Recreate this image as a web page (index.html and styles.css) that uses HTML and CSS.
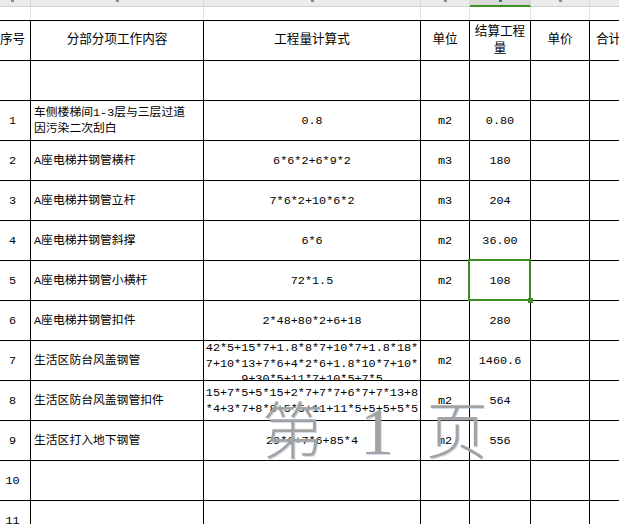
FILE: index.html
```html
<!DOCTYPE html>
<html lang="zh">
<head>
<meta charset="utf-8">
<title>工程量计算</title>
<link rel="stylesheet" href="styles.css">
</head>
<body>
<div class="colbar">
  <div class="ch"><i class="mk"></i></div>
  <div class="ch"><i class="mk"></i></div>
  <div class="ch"><i class="mk"></i></div>
  <div class="ch"><i class="mk"></i></div>
  <div class="ch sel"><i class="mk g"></i></div>
  <div class="ch"><i class="mk p"></i></div>
  <div class="ch"></div>
</div>
<div class="toprow">
  <div class="tc"></div><div class="tc"></div><div class="tc"></div><div class="tc"></div><div class="tc"></div><div class="tc"></div><div class="tc"></div>
</div>
<div class="sheet">
  <div class="c h">序号</div>
  <div class="c h">分部分项工作内容</div>
  <div class="c h">工程量计算式</div>
  <div class="c h">单位</div>
  <div class="c h"><span>结算工程<br>量</span></div>
  <div class="c h">单价</div>
  <div class="c h left">合计</div>

  <div class="c"></div><div class="c"></div><div class="c"></div><div class="c"></div><div class="c"></div><div class="c"></div><div class="c"></div>

  <div class="c">1</div>
  <div class="c desc"><span>车侧楼梯间1-3层与三层过道<br>因污染二次刮白</span></div>
  <div class="c">0.8</div>
  <div class="c">m2</div>
  <div class="c">0.80</div>
  <div class="c"></div><div class="c"></div>

  <div class="c">2</div>
  <div class="c desc">A座电梯井钢管横杆</div>
  <div class="c">6*6*2+6*9*2</div>
  <div class="c">m3</div>
  <div class="c">180</div>
  <div class="c"></div><div class="c"></div>

  <div class="c">3</div>
  <div class="c desc">A座电梯井钢管立杆</div>
  <div class="c">7*6*2+10*6*2</div>
  <div class="c">m3</div>
  <div class="c">204</div>
  <div class="c"></div><div class="c"></div>

  <div class="c">4</div>
  <div class="c desc">A座电梯井钢管斜撑</div>
  <div class="c">6*6</div>
  <div class="c">m2</div>
  <div class="c">36.00</div>
  <div class="c"></div><div class="c"></div>

  <div class="c">5</div>
  <div class="c desc">A座电梯井钢管小横杆</div>
  <div class="c">72*1.5</div>
  <div class="c">m2</div>
  <div class="c active">108<i class="selbox"></i><i class="handle"></i></div>
  <div class="c"></div><div class="c"></div>

  <div class="c">6</div>
  <div class="c desc">A座电梯井钢管扣件</div>
  <div class="c">2*48+80*2+6+18</div>
  <div class="c"></div>
  <div class="c">280</div>
  <div class="c"></div><div class="c"></div>

  <div class="c">7</div>
  <div class="c desc">生活区防台风盖钢管</div>
  <div class="c form top"><span>42*5+15*7+1.8*8*7+10*7+1.8*18*<br>7+10*13+7*6+4*2*6+1.8*10*7+10*<br>9+30*5+11*7+10*5+7*5</span></div>
  <div class="c">m2</div>
  <div class="c">1460.6</div>
  <div class="c"></div><div class="c"></div>

  <div class="c">8</div>
  <div class="c desc">生活区防台风盖钢管扣件</div>
  <div class="c form"><span>15+7*5+5*15+2*7+7*7+6*7+7*13+8<br>*4+3*7+8*8+5*5+11+11*5+5+5+5*5</span></div>
  <div class="c">m2</div>
  <div class="c">564</div>
  <div class="c"></div><div class="c"></div>

  <div class="c">9</div>
  <div class="c desc">生活区打入地下钢管</div>
  <div class="c">29*6+7*6+85*4</div>
  <div class="c">m2</div>
  <div class="c">556</div>
  <div class="c"></div><div class="c"></div>

  <div class="c">10</div>
  <div class="c desc"></div>
  <div class="c"></div><div class="c"></div><div class="c"></div><div class="c"></div><div class="c"></div>

  <div class="c">11</div>
  <div class="c desc"></div>
  <div class="c"></div><div class="c"></div><div class="c"></div><div class="c"></div><div class="c"></div>
</div>
<div class="watermark"><span class="wm-cjk">第</span><span class="wm-num">1</span><span class="wm-cjk">页</span></div>
</body>
</html>
```
FILE: styles.css
```css
html, body {
  margin: 0;
  padding: 0;
  background: #ffffff;
  overflow: hidden;
  width: 619px;
  height: 524px;
}
body {
  position: relative;
  font-family: "Liberation Mono", "Noto Sans CJK SC", monospace;
  font-size: 11.8px;
  color: #000;
}
.colbar, .toprow, .sheet {
  display: grid;
  grid-template-columns: 36px 173px 217px 49px 61px 59px 120px;
  margin-left: -5px;
  width: 715px;
}
.colbar {
  height: 7px;
  background: #ebebeb;
}
.ch {
  box-sizing: border-box;
  border-right: 1px solid #d6d6d6;
  border-bottom: 1px solid #d2d2d2;
  display: flex;
  justify-content: center;
  align-items: flex-start;
}
.ch.sel {
  background: #d9d9d9;
  border-bottom: 2px solid #3f8f24;
}
.mk {
  display: block;
  width: 3px;
  height: 2px;
  background: #8a8a8a;
}
.mk.g { background: #1f8a4a; }
.mk.p { background: #9b7fb0; }
.toprow {
  height: 13px;
}
.tc {
  box-sizing: border-box;
  border-right: 1px solid #e2e2e2;
}
.sheet {
  grid-auto-rows: 40px;
  border-top: 1px solid #000;
}
.c {
  box-sizing: border-box;
  border-right: 1px solid #000;
  border-bottom: 1px solid #000;
  display: flex;
  align-items: center;
  justify-content: center;
  text-align: center;
  line-height: 16px;
  white-space: nowrap;
}
.c.h {
  font-size: 12.6px;
  line-height: 17px;
}
.c.left {
  justify-content: flex-start;
  padding-left: 6px;
}
.c.desc {
  justify-content: flex-start;
  text-align: left;
  padding-left: 3px;
}
.c.form {
  overflow: hidden;
}
.c.top {
  align-items: flex-start;
  padding-top: 0;
  line-height: 15.5px;
}
.c.active {
  position: relative;
}
.selbox {
  position: absolute;
  left: -2px;
  top: -2px;
  right: -1px;
  bottom: -1px;
  border: 2px solid #3f8a25;
}
.handle {
  position: absolute;
  right: -3px;
  bottom: -3px;
  width: 5px;
  height: 5px;
  background: #3f8a25;
}
.watermark {
  position: absolute;
  left: 262px;
  top: 396px;
  display: flex;
  align-items: baseline;
  color: #a3a3a3;
  text-shadow: 1px 1px 0 rgba(150, 180, 215, 0.45);
  line-height: 1;
  pointer-events: none;
}
.wm-cjk {
  font-family: "Noto Sans CJK SC", sans-serif;
  font-size: 62px;
  font-weight: 300;
}
.wm-num {
  font-family: "Liberation Serif", serif;
  font-size: 68px;
  margin: 0 32px 0 36px;
}
```
